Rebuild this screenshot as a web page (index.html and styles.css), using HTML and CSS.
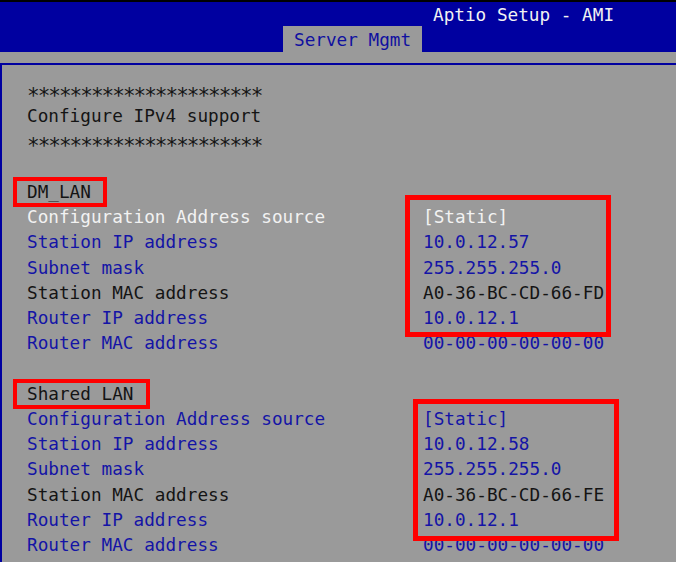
FILE: index.html
```html
<!DOCTYPE html>
<html>
<head>
<meta charset="utf-8">
<link rel="stylesheet" href="styles.css">
</head>
<body>
<div class="page">
  <header class="header">
    <div class="title-row">Aptio Setup - AMI</div>
    <div class="tab-row"><div class="tab">Server Mgmt</div></div>
  </header>
  <div class="strip"></div>
  <main class="panel">
    <div class="line black"><span class="stars">**********************</span></div>
    <div class="line black">Configure IPv4 support</div>
    <div class="line black"><span class="stars">**********************</span></div>
    <div class="line">&nbsp;</div>
    <div class="line black"><span class="mark">DM_LAN</span></div>
    <div class="row white"><span>Configuration Address source</span><span>[Static]</span></div>
    <div class="row blue"><span>Station IP address</span><span>10.0.12.57</span></div>
    <div class="row blue"><span>Subnet mask</span><span>255.255.255.0</span></div>
    <div class="row black"><span>Station MAC address</span><span>A0-36-BC-CD-66-FD</span></div>
    <div class="row blue"><span>Router IP address</span><span>10.0.12.1</span></div>
    <div class="row blue"><span>Router MAC address</span><span>00-00-00-00-00-00</span></div>
    <div class="line">&nbsp;</div>
    <div class="line black"><span class="mark">Shared LAN</span></div>
    <div class="row blue"><span>Configuration Address source</span><span>[Static]</span></div>
    <div class="row blue"><span>Station IP address</span><span>10.0.12.58</span></div>
    <div class="row blue"><span>Subnet mask</span><span>255.255.255.0</span></div>
    <div class="row black"><span>Station MAC address</span><span>A0-36-BC-CD-66-FE</span></div>
    <div class="row blue"><span>Router IP address</span><span>10.0.12.1</span></div>
    <div class="row blue"><span>Router MAC address</span><span>00-00-00-00-00-00</span></div>
  </main>
  <div class="box box-dm"></div>
  <div class="box box-shared"></div>
</div>
</body>
</html>
```
FILE: styles.css
```css
html, body {
  margin: 0;
  padding: 0;
  background: #9a9a9a;
  overflow: hidden;
}
.page {
  position: relative;
  width: 676px;
  height: 562px;
  overflow: hidden;
  font-family: "DejaVu Sans Mono", "Liberation Mono", monospace;
  font-size: 17.7px;
  background: #9a9a9a;
}
.header {
  background: #0000a0;
  border-top: 2px solid #000;
  height: 50px;
  display: flex;
  flex-direction: column;
}
.title-row {
  height: 24px;
  line-height: 26px;
  padding-left: 433px;
  color: #f2f2f2;
}
.tab-row {
  height: 26px;
  padding-left: 283px;
  display: flex;
}
.tab {
  width: 139px;
  height: 26px;
  background: #9a9a9a;
  color: #1010a0;
  line-height: 28px;
  padding-left: 11px;
  box-sizing: border-box;
}
.strip {
  height: 11px;
  background: #9a9a9a;
}
.panel {
  border-top: 2px solid #0000a0;
  border-left: 2px solid #0000a0;
  padding: 14px 0 0 25px;
  height: 520px;
}
.line, .row {
  height: 25.22px;
  line-height: 25.22px;
  white-space: pre;
}
.row {
  display: grid;
  grid-template-columns: 396px 1fr;
}
.stars {
  font-size: 21px;
  letter-spacing: -1.99px;
  vertical-align: -6px;
  line-height: 20px;
}
.black { color: #141414; }
.blue { color: #1414a6; }
.white { color: #f2f2f2; }
.mark {
  border: 4px solid #ff0000;
  padding: 1px 12px 1px 10px;
  margin-left: -14px;
}
.box {
  position: absolute;
  border: 5px solid #ff0000;
  box-sizing: border-box;
}
.box-dm {
  left: 405px;
  top: 195px;
  width: 206px;
  height: 142px;
}
.box-shared {
  left: 413px;
  top: 399px;
  width: 206px;
  height: 142px;
}
```
